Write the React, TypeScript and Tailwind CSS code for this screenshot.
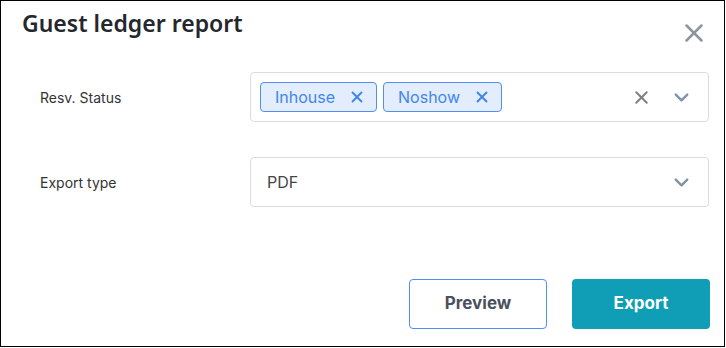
import { X, ChevronDown } from "lucide-react";

const Tag = ({ label }: { label: string }) => (
  <div className="h-[30px] flex items-center gap-[13px] pl-[14px] pr-[10px] bg-[#e3edfd] border border-[#4f8ff0] rounded-[4px] text-[#3f86ec] text-[16px]">
    <span>{label}</span>
    <X size={18} strokeWidth={2.5} />
  </div>
);

export default function App() {
  return (
    <div className="w-[725px] h-[347px] border border-black bg-white flex flex-col font-['Inter',sans-serif]">
      <div className="flex justify-between items-start pl-[21px] pr-[15px] pt-[5px]">
        <h1 className="text-[23px] font-semibold text-[#24272d] font-['Noto_Sans',sans-serif]">
          Guest ledger report
        </h1>
        <X size={30} strokeWidth={2} className="text-[#8a96a2] mt-[12px]" />
      </div>

      <div className="flex items-center mt-[24px] pl-[39px] pr-[15px]">
        <div className="w-[210px] text-[14px] text-[#333]">Resv. Status</div>
        <div className="flex-1 h-[50px] border border-[#dcdcdc] rounded-[4px] flex items-center pl-[9px] pr-[15px]">
          <div className="flex gap-[6px] flex-1">
            <Tag label="Inhouse" />
            <Tag label="Noshow" />
          </div>
          <X size={21} strokeWidth={2.25} className="text-[#7f7f7f] mr-[18px]" />
          <ChevronDown size={23} strokeWidth={2.5} className="text-[#8194a6]" />
        </div>
      </div>

      <div className="flex items-center mt-[35px] pl-[39px] pr-[15px]">
        <div className="w-[210px] text-[14px] text-[#333]">Export type</div>
        <div className="flex-1 h-[50px] border border-[#dcdcdc] rounded-[4px] flex items-center pl-[16px] pr-[15px]">
          <span className="flex-1 text-[16px] text-[#444]">PDF</span>
          <ChevronDown size={23} strokeWidth={2.5} className="text-[#8194a6]" />
        </div>
      </div>

      <div className="flex justify-end gap-[25px] mt-[72px] pr-[14px]">
        <button className="w-[138px] h-[50px] border border-[#4f8ff0] rounded-[4px] text-[17px] font-bold text-[#4a505c]">
          Preview
        </button>
        <button className="w-[138px] h-[50px] bg-[#109db6] rounded-[4px] text-[17px] font-bold text-white">
          Export
        </button>
      </div>
    </div>
  );
}
